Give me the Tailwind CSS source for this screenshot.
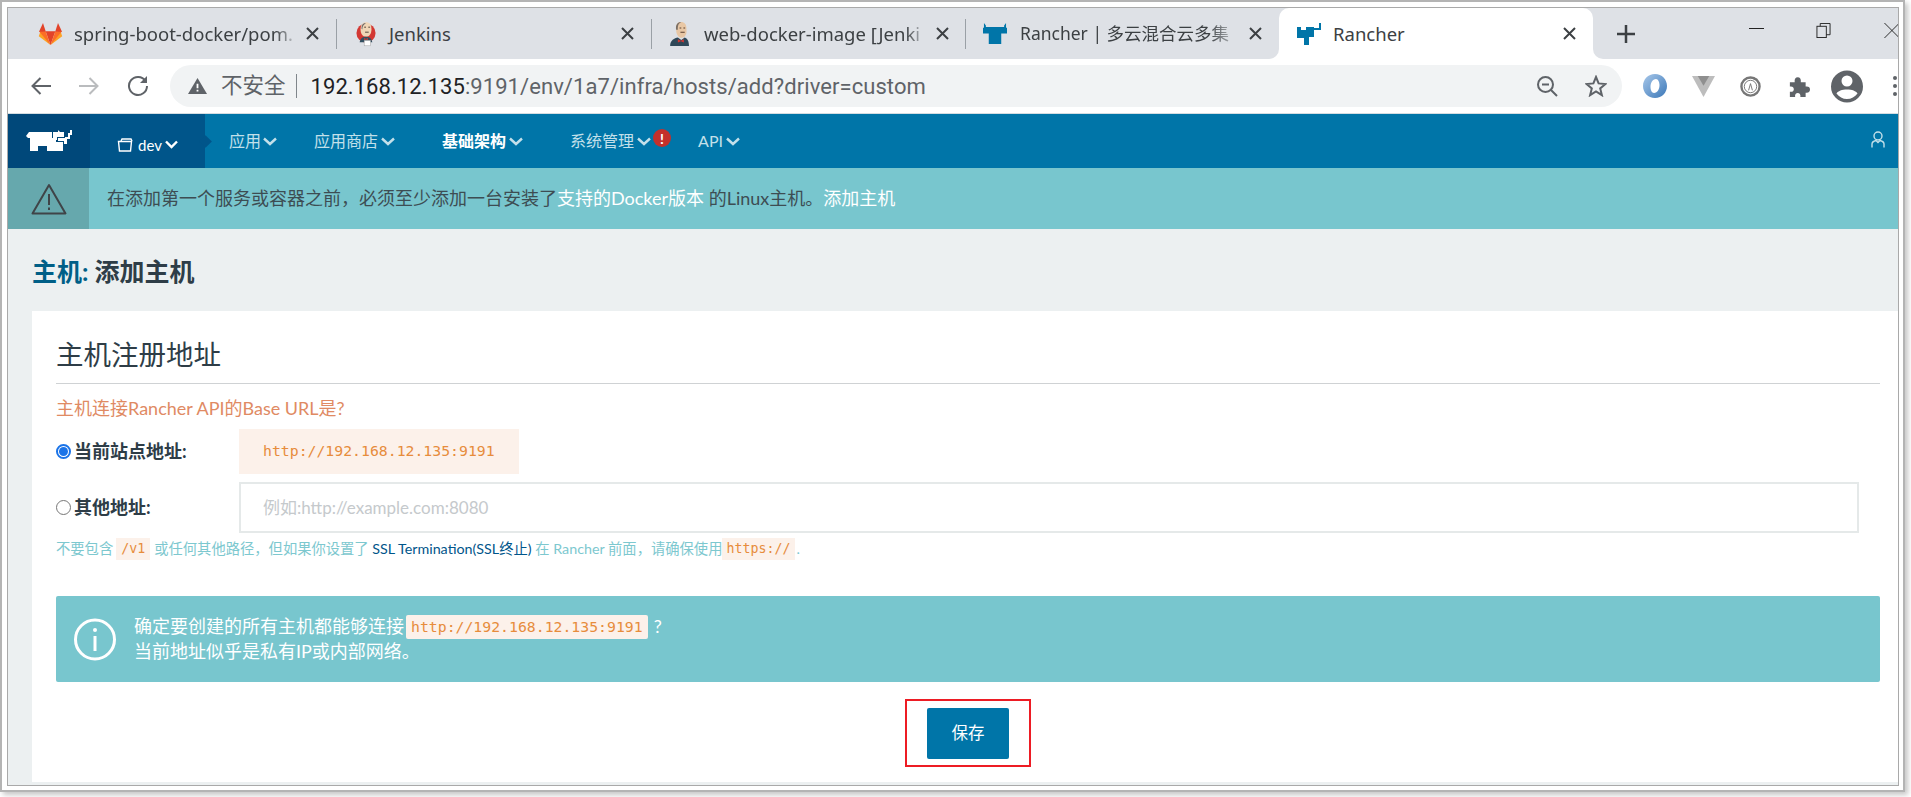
<!DOCTYPE html>
<html lang="zh">
<head>
<meta charset="utf-8">
<title>Rancher</title>
<script src="https://cdn.jsdelivr.net/npm/@tailwindcss/browser@4"></script>
</head>
<body class="bg-white overflow-hidden w-[1911px] h-[797px] font-['Lato','Noto_Sans_CJK_SC',sans-serif]">
<div class="w-[1905px] h-[792px] border-2 border-[#b4b4b4] pt-[5px] pl-[5px] bg-white shadow-[3px_3px_5px_rgba(0,0,0,0.22)]">
<div class="w-[1892px] h-[779px] border border-[#a9a9a9] flex flex-col overflow-hidden">

  <!-- tab strip -->
  <div class="h-[51px] shrink-0 bg-[#dee1e6] flex items-center relative font-['Noto_Sans','Noto_Sans_CJK_SC',sans-serif] text-[18.500px] text-[#3c4043]">
    <div class="w-[329px] h-full flex items-center pl-[30px] shrink-0">
      <svg class="w-[25px] h-[22px] shrink-0" viewBox="0 0 25 24" preserveAspectRatio="none"><path d="M12.5 24 0.8 14.5 3.4 6z" fill="#fca326"/><path d="M12.5 24 24.2 14.5 21.6 6z" fill="#fca326"/><path d="M12.5 24 7.6 9H17.4z" fill="#e24329"/><path d="M12.5 24 1 9H7.6z" fill="#fc6d26"/><path d="M12.5 24 24 9H17.4z" fill="#fc6d26"/><path d="M1 9.5 5 0 7.8 9.5z" fill="#e24329"/><path d="M24 9.5 20 0 17.2 9.5z" fill="#e24329"/></svg>
      <div class="ml-[11px] w-[224px] whitespace-nowrap [mask-image:linear-gradient(to_right,black_90%,transparent)]">spring-boot-docker/pom.</div>
      <svg class="ml-[8px] w-[13px] h-[13px] shrink-0" viewBox="0 0 13 13"><path d="M1 1 12 12M12 1 1 12" stroke="#3c4043" stroke-width="2"/></svg>
      <div class="ml-[17px] w-[1px] h-[30px] bg-[#9aa0a6] shrink-0"></div>
    </div>
    <div class="w-[315px] h-full flex items-center pl-[19px] shrink-0">
      <svg class="w-[20px] h-[26px] shrink-0" viewBox="0 0 22 26"><circle cx="11" cy="12" r="10.5" fill="#d33833"/><path d="M5 8C5 2 8 0 11.500 0 16 0 17 4 17 8 17 12 15 16 11 16 7 16 5 12 5 8Z" fill="#f0d6b7"/><path d="M6 7C6 3 8 1 11 1 8 3 7 5 7 8Z" fill="#6d6b6d"/><path d="M9 5.500H11M13.500 5.500H15.500M10 11H14" stroke="#4a3a30" stroke-width="1"/><path d="M4 22C5 17 8 16 11 16 15 16 17 18 18 22Z" fill="#335061"/><path d="M9 17 11 18.500 13 17V20L11 19 9 20Z" fill="#d33833"/><rect x="9" y="20" width="7" height="6" fill="#fff" stroke="#999" stroke-width=".5"/></svg>
      <div class="ml-[13px] w-[227px] whitespace-nowrap">Jenkins</div>
      <svg class="ml-[5px] w-[13px] h-[13px] shrink-0" viewBox="0 0 13 13"><path d="M1 1 12 12M12 1 1 12" stroke="#3c4043" stroke-width="2"/></svg>
      <div class="ml-[17px] w-[1px] h-[30px] bg-[#9aa0a6] shrink-0"></div>
    </div>
    <div class="w-[314px] h-full flex items-center pl-[17px] shrink-0">
      <svg class="w-[22px] h-[24px] shrink-0" viewBox="0 0 23 28"><path d="M7 7C7 2 9 0 12.500 0 17 0 19 3 19 7 19 11 20 13 17 17 15 19 11 19 9 16 7 13 7 11 7 7Z" fill="#e8c7a5"/><path d="M7 9C6 3 9 0 13 0 9 2 9 5 9 9Z" fill="#7a6f66"/><path d="M11 7H13M15.500 7H17.500M12 12H17" stroke="#5a4030" stroke-width="1.200"/><path d="M0 28C0 21 5 19 9 18L13 21 17 18C20 19 22 22 22 28Z" fill="#2f4858"/><path d="M9 20 12.500 22 16 20V24L12.500 22.500 9 24Z" fill="#d33833"/></svg>
      <div class="ml-[13px] w-[224px] whitespace-nowrap [mask-image:linear-gradient(to_right,black_90%,transparent)]">web-docker-image [Jenki</div>
      <svg class="ml-[8px] w-[13px] h-[13px] shrink-0" viewBox="0 0 13 13"><path d="M1 1 12 12M12 1 1 12" stroke="#3c4043" stroke-width="2"/></svg>
      <div class="ml-[16px] w-[1px] h-[30px] bg-[#9aa0a6] shrink-0"></div>
    </div>
    <div class="w-[313px] h-full flex items-center pl-[17px] shrink-0 relative">
      <div class="absolute right-0 bottom-0 w-[10px] h-[10px] bg-white"><div class="w-full h-full bg-[#dee1e6] rounded-br-[10px]"></div></div>
      <svg class="w-[24px] h-[21px] shrink-0 relative" viewBox="0 0 25 26" preserveAspectRatio="none"><path d="M1 0V7H24V0L22 3V5H3V3Z" fill="#0075a8"/><path d="M0 6H25V13H19V26H6V13H0Z" fill="#0075a8"/></svg>
      <div class="ml-[13px] w-[222px] whitespace-nowrap overflow-hidden text-[17.500px] [mask-image:linear-gradient(to_right,black_85%,transparent)]">Rancher | 多云混合云多集</div>
      <svg class="ml-[7px] w-[13px] h-[13px] shrink-0" viewBox="0 0 13 13"><path d="M1 1 12 12M12 1 1 12" stroke="#3c4043" stroke-width="2"/></svg>
    </div>
    <!-- active tab -->
    <div class="w-[314px] h-full flex items-center pl-[18px] shrink-0 bg-white rounded-t-[10px] relative">
      <svg class="w-[24px] h-[22px] shrink-0" viewBox="0 0 24 22"><path d="M0 4H4V7H9V4H17V14H12V22H7V15H0Z" fill="#0075a8"/><path d="M17 5H22V0H24V7H17Z" fill="#0075a8"/></svg>
      <div class="ml-[12px] w-[223px] whitespace-nowrap">Rancher</div>
      <svg class="ml-[7px] w-[13px] h-[13px] shrink-0" viewBox="0 0 13 13"><path d="M1 1 12 12M12 1 1 12" stroke="#3c4043" stroke-width="2"/></svg>
      <div class="absolute left-full bottom-0 w-[10px] h-[10px] bg-white"><div class="w-full h-full bg-[#dee1e6] rounded-bl-[10px]"></div></div>
    </div>
    <svg class="ml-[24px] w-[18px] h-[18px] shrink-0" viewBox="0 0 18 18"><path d="M9 0V18M0 9H18" stroke="#3c4043" stroke-width="2.500"/></svg>
    <div class="ml-auto flex items-start h-full pt-[20px]">
      <div class="w-[15px] h-[1px] bg-[#222]"></div>
      <svg class="ml-[52px] -mt-[5px] w-[15px] h-[15px]" viewBox="0 0 15 16" fill="none" stroke="#222"><rect x=".5" y="3.500" width="10" height="12"/><path d="M4 3.500V.5H14.500V12.500H10.500"/></svg>
      <svg class="ml-[53px] -mt-[5px] w-[14px] h-[15px]" viewBox="0 0 14 16" fill="none" stroke="#222"><path d="M0 0 16 16M16 0 0 16"/></svg>
    </div>
  </div>

  <!-- toolbar -->
  <div class="h-[55px] shrink-0 bg-white border-b border-[#d4dde2] flex items-center relative">
    <svg class="ml-[23px] w-[20px] h-[18px] shrink-0" viewBox="0 0 20 18" fill="none" stroke="#5f6368" stroke-width="2"><path d="M20 9H2M9.500 1 1.500 9 9.500 17"/></svg>
    <svg class="ml-[28px] w-[20px] h-[18px] shrink-0" viewBox="0 0 20 18" fill="none" stroke="#babcbe" stroke-width="2"><path d="M0 9H18M10.500 1 18.500 9 10.500 17"/></svg>
    <svg class="ml-[28px] w-[22px] h-[22px] shrink-0" viewBox="0 0 22 22" fill="none"><path d="M18.500 6A9 9 0 1 0 20 11" stroke="#5f6368" stroke-width="2"/><path d="M20 1V8H13Z" fill="#5f6368"/></svg>
    <div class="ml-[21px] w-[1452px] h-[42px] bg-[#f1f3f4] rounded-full flex items-center pl-[18px] shrink-0">
      <svg class="w-[19px] h-[16px] shrink-0" viewBox="0 0 19 17" preserveAspectRatio="none"><path d="M9.500 0 19 17H0Z" fill="#5f6368"/><path d="M8.600 6H10.400V11H8.600ZM8.600 12.500H10.400V14.300H8.600Z" fill="#fff"/></svg>
      <span class="ml-[14px] text-[21.500px] text-[#5f6368] font-['Roboto','Noto_Sans_CJK_SC',sans-serif] whitespace-nowrap">不安全</span>
      <span class="ml-[10px] w-[1px] h-[24px] bg-[#80868b]"></span>
      <span class="ml-[14px] text-[22px] tracking-[0.07px] text-[#5f6368] font-['Roboto',sans-serif] whitespace-nowrap"><span class="text-[#202124]">192.168.12.135</span>:9191/env/1a7/infra/hosts/add?driver=custom</span>
      <svg class="ml-auto w-[21px] h-[21px] shrink-0" viewBox="0 0 21 21" fill="none" stroke="#5f6368" stroke-width="2"><circle cx="8.500" cy="8.500" r="7.500"/><path d="M14 14 20 20M5 8.500H12"/></svg>
      <svg class="ml-[27px] mr-[15px] w-[22px] h-[22px] shrink-0" viewBox="0 0 22 22" fill="none" stroke="#5f6368" stroke-width="2"><path d="M11 2 13.600 8.400 20.500 9 15.200 13.400 16.900 20.200 11 16.500 5.100 20.200 6.800 13.400 1.500 9 8.400 8.400Z"/></svg>
    </div>
    <svg class="ml-[21px] w-[24px] h-[24px] shrink-0" viewBox="0 0 24 24"><defs><linearGradient id="j" x1="0" x2="1" y1="0" y2="1"><stop offset="0" stop-color="#a8c8ea"/><stop offset="1" stop-color="#3c78b8"/></linearGradient></defs><path fill-rule="evenodd" d="M12 0C19 0 24 5.500 24 12 24 18.500 19 24 12 24 5 24 0 18.500 0 12 0 5.500 5 0 12 0ZM13 5C9.500 5 7.500 9 7.500 13 7.500 16 9 19 11 19 14.500 19 16.500 15 16.500 11 16.500 8 15 5 13 5Z" fill="url(#j)"/></svg>
    <svg class="ml-[25px] w-[23px] h-[21px] shrink-0" viewBox="0 0 24 26" preserveAspectRatio="none"><path d="M0 0H24L12 26Z" fill="#bdbdbd"/><path d="M6 0H18L12 12Z" fill="#8f8f8f"/></svg>
    <svg class="ml-[25px] w-[21px] h-[21px] shrink-0" viewBox="0 0 22 22" fill="none" stroke="#777"><circle cx="11" cy="11" r="9.500" stroke-width="2.500"/><circle cx="11" cy="11" r="6.500" stroke-width="1"/><path d="M9 15 11 8 13 15M14 4 18 3" stroke-width="1"/></svg>
    <svg class="ml-[28px] w-[21px] h-[21px] shrink-0" viewBox="0 0 24 24"><path d="M1 7H6.500C6 3.500 7.500 1.500 10 1.500S14 3.500 13.500 7H19V12C22.500 11.500 24 13 24 15.500S22.500 19.500 19 19V24H13C13.500 21 12 19.500 10 19.500S6.500 21 7 24H1V18C4 18.500 5.500 17 5.500 15S4 11.500 1 12Z" fill="#5f6368"/></svg>
    <svg class="ml-[21px] w-[32px] h-[33px] shrink-0" viewBox="0 0 32 32"><path fill-rule="evenodd" d="M16 0A16 16 0 1 1 16 32 16 16 0 0 1 16 0ZM16 5A5.500 5.500 0 1 0 16 16 5.500 5.500 0 0 0 16 5ZM16 19C11 19 7 20.500 5.500 23 8 26.500 11.800 28.500 16 28.500S24 26.500 26.500 23C25 20.500 21 19 16 19Z" fill="#5f6368"/></svg>
    <div class="ml-[30px] flex flex-col gap-[4px] shrink-0"><span class="w-[4px] h-[4px] rounded-full bg-[#5f6368]"></span><span class="w-[4px] h-[4px] rounded-full bg-[#5f6368]"></span><span class="w-[4px] h-[4px] rounded-full bg-[#5f6368]"></span></div>
  </div>

  <!-- nav -->
  <div class="h-[54px] shrink-0 bg-[#0075a8] flex items-center text-[16px] text-[#c3e0ea] relative">
    <div class="w-[82px] h-full bg-[#00487a] flex items-center justify-center shrink-0">
      <svg class="w-[46px] h-[23px]" viewBox="0 0 46 23" fill="#fff"><path d="M0 6 3 2H26V8H30V12H37V21H21V16H12V21H4V8H2Z"/><path d="M27 2H32V0L34 2H38V7H31V10H27Z"/><path d="M32 8H39V7H42V3H44V0H46V5H44V9H41V14H38V11H32Z"/></svg>
    </div>
    <div class="w-[115px] h-full bg-[#00558a] flex items-center pl-[27px] pt-[8px] shrink-0 relative text-white text-[15px]">
      <svg class="w-[16px] h-[14px] shrink-0" viewBox="0 0 16 14" fill="none" stroke="#fff" stroke-width="1.400"><path d="M1.500 3.500H14.500L13.500 13H2.500Z"/><path d="M4 3 5 1H14L15 3"/></svg>
      <span class="ml-[5px]">dev</span>
      <svg class="ml-[3px] -mt-[2px] w-[13px] h-[9px]" viewBox="0 0 13 9" fill="none" stroke="#fff" stroke-width="2.400"><path d="M1 1.500 6.500 7 12 1.500"/></svg>
      <div class="absolute left-[111px] top-[23px] w-[9px] h-[9px] bg-[#00558a] rotate-45"></div>
    </div>
    <div class="ml-[24px] flex items-center"><span>应用</span><svg class="ml-[2px] w-[14px] h-[9px]" viewBox="0 0 14 9" fill="none" stroke="#c3e0ea" stroke-width="2.400"><path d="M1 1.500 7 7 13 1.500"/></svg></div>
    <div class="ml-[37px] flex items-center"><span>应用商店</span><svg class="ml-[3px] w-[14px] h-[9px]" viewBox="0 0 14 9" fill="none" stroke="#c3e0ea" stroke-width="2.400"><path d="M1 1.500 7 7 13 1.500"/></svg></div>
    <div class="ml-[47px] flex items-center"><span class="font-bold text-white">基础架构</span><svg class="ml-[3px] w-[14px] h-[9px]" viewBox="0 0 14 9" fill="none" stroke="#c3e0ea" stroke-width="2.400"><path d="M1 1.500 7 7 13 1.500"/></svg></div>
    <div class="ml-[47px] flex items-center"><span>系统管理</span><svg class="ml-[3px] w-[14px] h-[9px]" viewBox="0 0 14 9" fill="none" stroke="#c3e0ea" stroke-width="2.400"><path d="M1 1.500 7 7 13 1.500"/></svg><span class="ml-[2px] -mt-[6px] w-[18px] h-[18px] rounded-full bg-[#c4302b] text-white text-[14px] font-bold flex items-center justify-center">!</span></div>
    <div class="ml-[27px] flex items-center"><span>API</span><svg class="ml-[3px] w-[14px] h-[9px]" viewBox="0 0 14 9" fill="none" stroke="#c3e0ea" stroke-width="2.400"><path d="M1 1.500 7 7 13 1.500"/></svg></div>
    <svg class="ml-auto mr-[13px] -mt-[4px] w-[14px] h-[17px]" viewBox="0 0 14 17" fill="none" stroke="#c3e0ea" stroke-width="1.400"><circle cx="7" cy="5" r="4"/><path d="M1 16.500V13C1 11 3 10 5 9.500L7 11.500 9 9.500C11 10 13 11 13 13V16.500"/></svg>
  </div>

  <!-- notification -->
  <div class="h-[61px] shrink-0 bg-[#78c6ce] flex items-center text-[18px] text-[#3d4d53]">
    <div class="w-[81px] h-full bg-[#66a8ad] flex items-center justify-center shrink-0">
      <svg class="w-[36px] h-[32px]" viewBox="0 0 36 32" fill="none" stroke="#3f4448" stroke-width="2" stroke-linejoin="round"><path d="M18 2 34.500 30.500H1.500Z"/><path d="M18 11V22M18 24.500V27"/></svg>
    </div>
    <div class="ml-[18px] whitespace-nowrap">在添加第一个服务或容器之前，必须至少添加一台安装了<span class="text-white">支持的Docker版本</span> 的Linux主机。<span class="text-white">添加主机</span></div>
  </div>

  <!-- page body -->
  <div class="flex-1 min-h-0 bg-[#ecf0f1] pl-[24px] flex flex-col">
    <h1 class="h-[82px] shrink-0 pt-[24px] text-[25px] leading-[36px] font-bold text-[#2e3d47]"><span class="text-[#005f87]">主机:</span> 添加主机</h1>
    <div class="h-[471px] shrink-0 bg-white pl-[24px] pr-[18px]">
      <div class="h-[73px] border-b border-[#cfd2d4] pt-[26px] text-[27.500px] leading-[36px] text-[#2e3d47]">主机注册地址</div>
      <div class="mt-[12px] text-[18px] leading-[25px] text-[#e08a63]">主机连接Rancher API的Base URL是?</div>
      <div class="mt-[8px] h-[45px] flex items-center">
        <span class="w-[15px] h-[15px] rounded-full border-2 border-[#1a73e8] bg-white flex items-center justify-center shrink-0"><span class="w-[9px] h-[9px] rounded-full bg-[#1a73e8]"></span></span>
        <span class="ml-[3px] w-[165px] text-[18px] font-bold text-[#2e3d47]">当前站点地址:</span>
        <code class="w-[280px] h-full bg-[#fcf1ea] pl-[24px] flex items-center text-[14.800px] text-[#e78c3c] font-['DejaVu_Sans_Mono',monospace]">http://192.168.12.135:9191</code>
      </div>
      <div class="mt-[8px] h-[51px] flex items-center">
        <span class="w-[15px] h-[15px] rounded-full border border-[#767676] bg-white shrink-0"></span>
        <span class="ml-[3px] w-[165px] text-[18px] font-bold text-[#2e3d47]">其他地址:</span>
        <div class="w-[1620px] h-full border-2 border-[#e5e9e9] pl-[22px] flex items-center text-[17px] text-[#c5c9cc]">例如:http://example.com:8080</div>
      </div>
      <div class="mt-[5px] h-[22px] flex items-center whitespace-nowrap text-[14.300px] text-[#7dc8cf]">
        <span>不要包含</span><code class="ml-[3px] h-[22px] px-[5px] bg-[#fcf1ea] flex items-center text-[#e78c3c] text-[13.300px] font-['DejaVu_Sans_Mono',monospace]">/v1</code><span class="ml-[4px]">或任何其他路径，但如果你设置了 <span class="text-[#00558a]">SSL Termination(SSL终止)</span> 在 Rancher 前面，请确保使用</span><code class="h-[22px] px-[4px] bg-[#fcf1ea] flex items-center text-[#e78c3c] text-[13.300px] font-['DejaVu_Sans_Mono',monospace]">https://</code><span class="ml-[2px]">.</span>
      </div>
      <div class="mt-[36px] h-[86px] bg-[#78c6ce] rounded-[2px] flex items-center text-white text-[18px] leading-[25px]">
        <svg class="ml-[18px] w-[42px] h-[43px] shrink-0" viewBox="0 0 42 43" fill="none" stroke="#fff" stroke-width="3"><circle cx="21" cy="21.500" r="19.500"/><path d="M21 18V33" stroke-width="3"/><circle cx="21" cy="12" r="2" fill="#fff" stroke="none"/></svg>
        <div class="ml-[18px]">
          <div class="flex items-center whitespace-nowrap h-[25px]">确定要创建的所有主机都能够连接<code class="ml-[2px] h-[24px] px-[5px] bg-[#fcf1ea] rounded-[2px] flex items-center text-[#e78c3c] text-[14.800px] font-['DejaVu_Sans_Mono',monospace]">http://192.168.12.135:9191</code><span class="ml-[6px]">?</span></div>
          <div class="whitespace-nowrap">当前地址似乎是私有IP或内部网络。</div>
        </div>
      </div>
      <div class="mt-[17px] flex justify-center">
        <div class="w-[126px] h-[68px] border-2 border-[#ed1c24] flex items-center justify-center">
          <button class="w-[82px] h-[51px] bg-[#0075a8] rounded-[2px] text-white text-[16.500px]">保存</button>
        </div>
      </div>
    </div>
  </div>

</div>
</div>
</body>
</html>
